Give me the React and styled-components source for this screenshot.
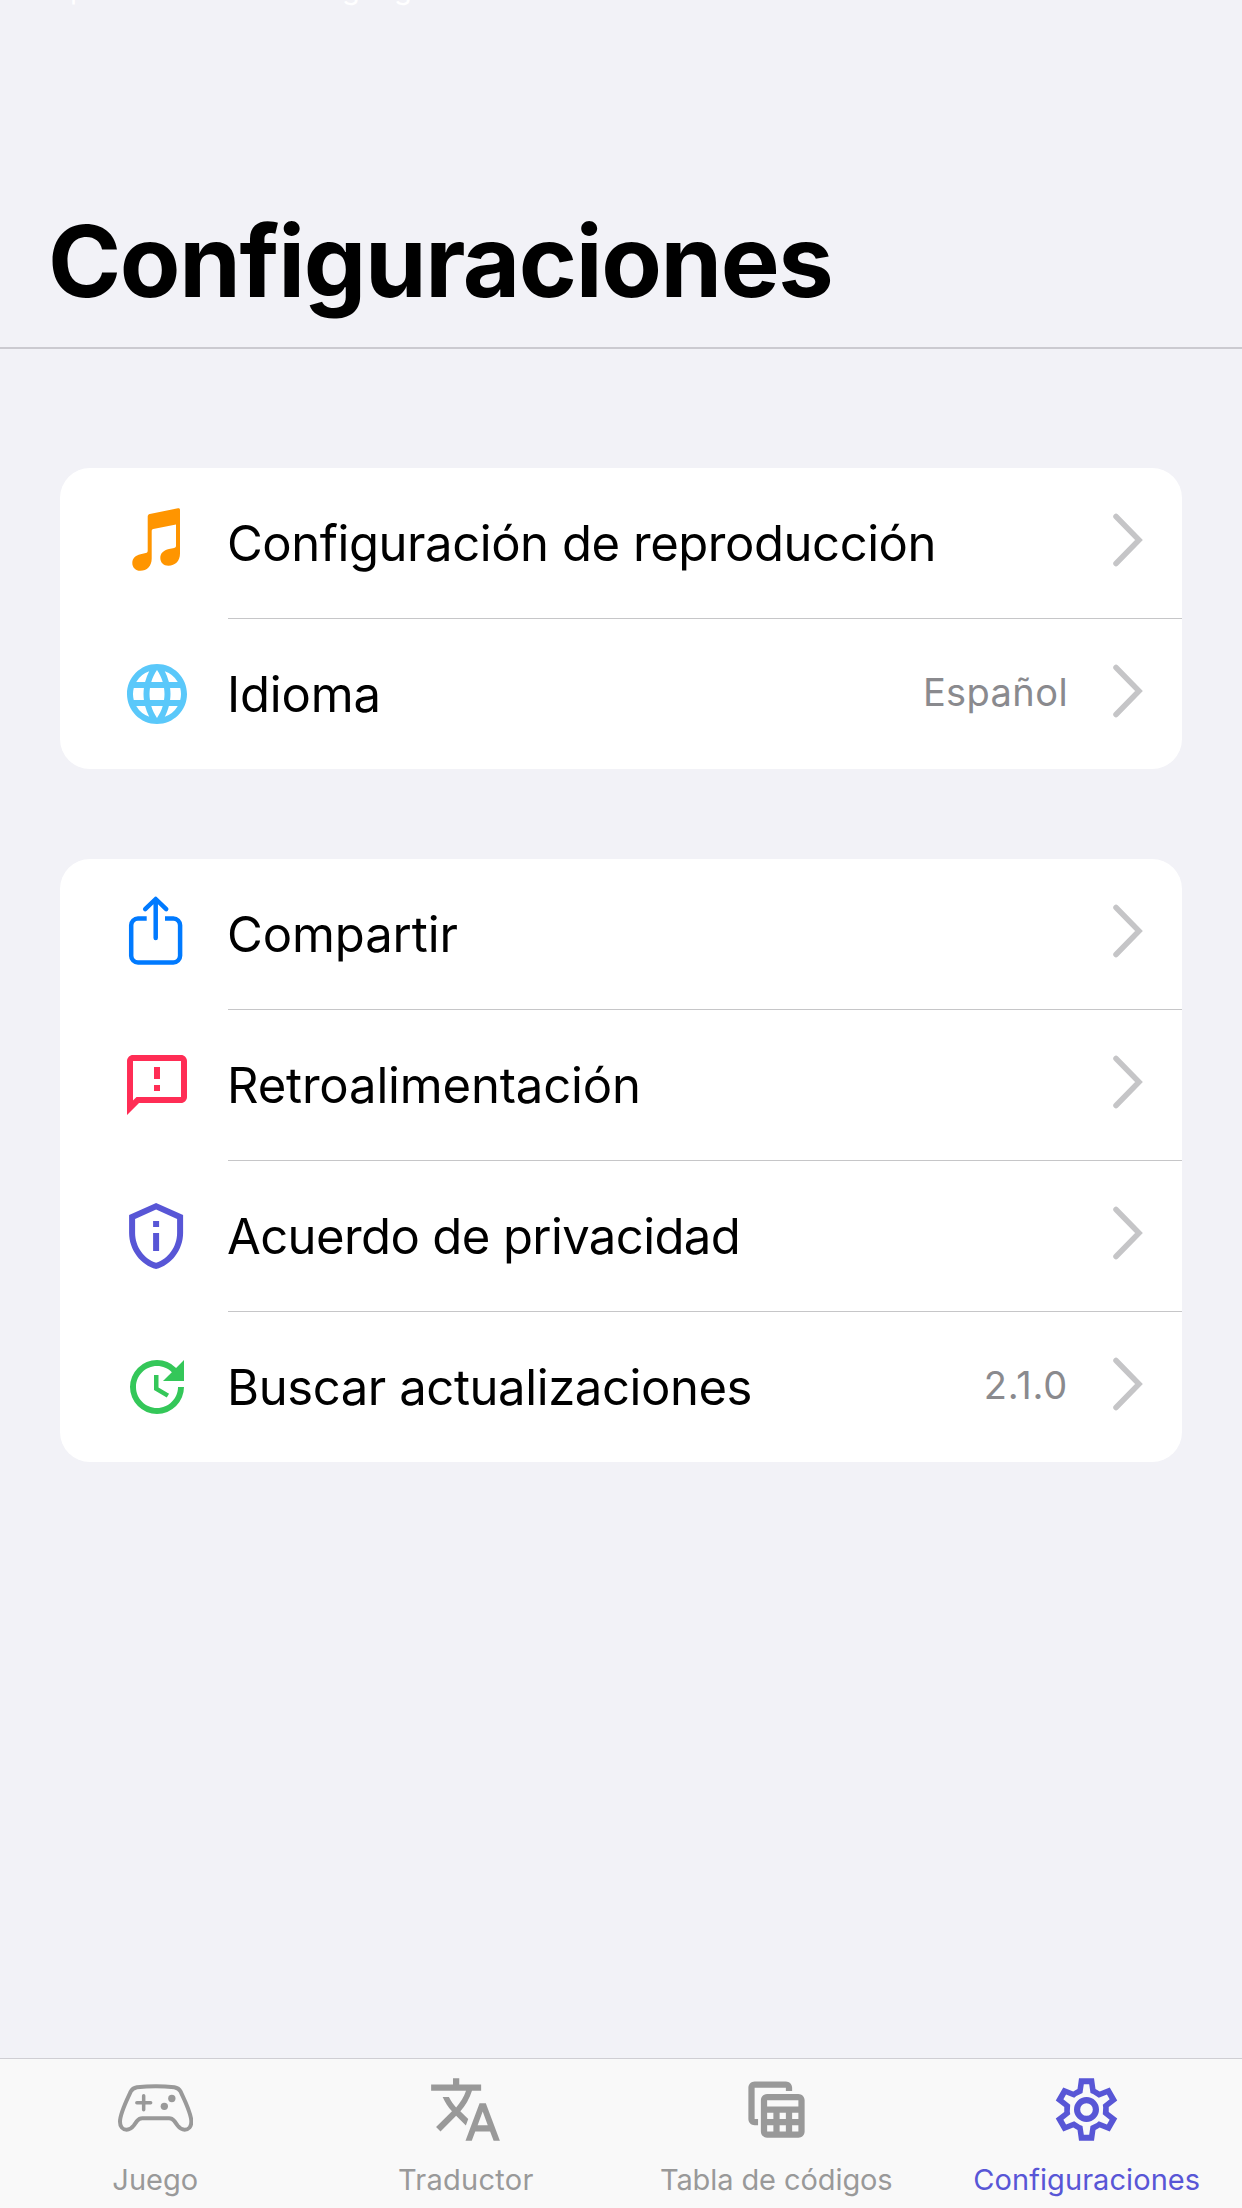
import React from "react";
import styled, { createGlobalStyle } from "styled-components";

const GlobalStyle = createGlobalStyle`
    * { box-sizing: border-box; }

    body {
        margin: 0;
        background: #f2f2f7;
        font-family: Inter, "Liberation Sans", sans-serif;
    }
`;

const Screen = styled.div`
    width: 1242px;
    height: 2208px;
    display: flex;
    flex-direction: column;
    overflow: hidden;
    background: #f2f2f7;
`;

const Header = styled.header`
    height: 349px;
    flex: none;
    display: flex;
    flex-direction: column;
    justify-content: space-between;
    border-bottom: 2px solid #cbcad0;
`;

/* tail of a caption that has scrolled off the top edge */
const ScrolledCaption = styled.div`
    height: 6px;
    overflow: hidden;
    display: flex;
    align-items: flex-end;
    padding-left: 70px;
    color: #fff;
    font-size: 29px;
    line-height: 1;
`;

const CaptionLetter = styled.span`
    width: ${props => props.$width}px;
    flex: none;
    margin-bottom: 3px;
`;

const Title = styled.h1`
    margin: 0;
    padding: 0 48px 36px;
    font-size: 99px;
    font-weight: 700;
    line-height: 1;
    letter-spacing: -1.38px;
    color: #000;
`;

const Content = styled.main`
    flex: 1;
    padding: 119px 60px 0;
    display: flex;
    flex-direction: column;
    gap: 90px;
`;

const Group = styled.section`
    background: #fff;
    border-radius: 30px;
    overflow: hidden;
`;

const Row = styled.div`
    display: flex;
    padding-left: 61px;
    height: 151px;

    &:last-child {
        height: 150px;
    }
`;

const RowIcon = styled.div`
    width: 72px;
    height: 150px;
    margin-right: 35px;
    flex: none;
    display: flex;
    align-items: center;
    color: ${props => props.$color};

    svg {
        width: 72px;
        height: 72px;
        overflow: visible;
    }
`;

const RowBody = styled.div`
    flex: 1;
    display: flex;
    align-items: center;
    padding-right: 39px;
    border-bottom: 1px solid #c6c6c8;

    ${Row}:last-child & {
        border-bottom: none;
    }
`;

const Label = styled.span`
    flex: 1;
    margin-left: -1px;
    font-size: 49px;
    line-height: 1;
    letter-spacing: ${props => props.$tracking}px;
    white-space: nowrap;
    color: #000;
`;

const Value = styled.span`
    font-size: 38px;
    line-height: 1;
    letter-spacing: ${props => props.$tracking}px;
    color: #8a8a8e;
    margin-right: 44px;
    padding-bottom: 4px;
`;

const Chevron = styled.svg`
    width: 31px;
    height: 54px;
    flex: none;
    margin-bottom: 7px;
`;

const TabBar = styled.nav`
    height: 150px;
    flex: none;
    display: grid;
    grid-template-columns: repeat(4, 1fr);
    background: #f9f9f9;
    border-top: 1px solid #cfced3;
`;

const Tab = styled.div`
    display: flex;
    flex-direction: column;
    align-items: center;
    gap: 18px;
    padding-top: 13px;
    color: ${props => (props.$active ? "#5856d6" : "#999")};

    svg {
        width: 75px;
        height: 75px;
        flex: none;
    }
`;

const TabLabel = styled.span`
    font-size: 29px;
    line-height: 1;
    letter-spacing: ${props => props.$tracking}px;
    white-space: nowrap;
`;

const MusicIcon = () => (
    <svg viewBox="0 0 72 72" fill="currentColor">
        <path d="M57 1.2 28.8 6.9C27.4 7.2 26.7 8.1 26.7 9.5V43.5C26.7 45 26.2 45.7 24.8 46L19.5 47.2C14.5 48.4 11.3 51.3 11.3 56C11.3 60.5 14.6 63.8 19.3 63.8C26 63.8 30.7 59 30.7 51.5V24.2C30.7 23 31.2 22.3 32.3 22.1L55 17.6V38.8C55 40 54.5 40.6 53.2 40.9L48 42.1C42.5 43.4 39.3 46.3 39.3 51C39.3 55.5 42.5 58.7 47.4 58.7C54.2 58.7 59 54 59 46.5V2.8C59 1.5 58.2 1 57 1.2Z" />
    </svg>
);

const GlobeIcon = () => (
    <svg viewBox="0 0 24 24" fill="currentColor">
        <path d="M11.99 2C6.47 2 2 6.48 2 12s4.47 10 9.99 10C17.52 22 22 17.52 22 12S17.52 2 11.99 2zm6.93 6h-2.95a15.65 15.65 0 0 0-1.38-3.56A8.03 8.03 0 0 1 18.92 8zM12 4.04c.83 1.2 1.48 2.53 1.91 3.96h-3.82c.43-1.43 1.08-2.76 1.91-3.96zM4.26 14C4.1 13.36 4 12.69 4 12s.1-1.36.26-2h3.38c-.08.66-.14 1.32-.14 2s.06 1.34.14 2H4.26zm.82 2h2.95c.32 1.25.78 2.45 1.38 3.56A7.987 7.987 0 0 1 5.08 16zm2.95-8H5.08a7.987 7.987 0 0 1 4.33-3.56A15.65 15.65 0 0 0 8.03 8zM12 19.96c-.83-1.2-1.48-2.53-1.91-3.96h3.82c-.43 1.43-1.08 2.76-1.91 3.96zM14.34 14H9.66c-.09-.66-.16-1.32-.16-2s.07-1.35.16-2h4.68c.09.65.16 1.32.16 2s-.07 1.34-.16 2zm.25 5.56c.6-1.11 1.06-2.31 1.38-3.56h2.95a8.03 8.03 0 0 1-4.33 3.56zM16.36 14c.08-.66.14-1.32.14-2s-.06-1.34-.14-2h3.38c.16.64.26 1.31.26 2s-.1 1.36-.26 2h-3.38z" />
    </svg>
);

const ShareIcon = () => (
    <svg viewBox="0 0 72 72" fill="none" stroke="currentColor" strokeWidth="4.5" strokeLinejoin="round">
        <path d="M25.7 20.5H17a6.8 6.8 0 0 0-6.8 6.8v30.4a6.8 6.8 0 0 0 6.8 6.8h35.3a6.8 6.8 0 0 0 6.8-6.8V27.3a6.8 6.8 0 0 0-6.8-6.8H44" />
        <path d="M34.7 2v38M24.2 11.2 34.7 1l10.5 10.2" strokeLinecap="round" />
    </svg>
);

const FeedbackIcon = () => (
    <svg viewBox="0 0 24 24" fill="currentColor">
        <path d="M20 2H4c-1.1 0-1.99.9-1.99 2L2 22l4-4h14c1.1 0 2-.9 2-2V4c0-1.1-.9-2-2-2zm0 14H5.17L4 17.17V4h16v12zm-9-4h2v2h-2zm0-6h2v4h-2z" />
    </svg>
);

const PrivacyIcon = () => (
    <svg viewBox="0.3 0 24 24" fill="currentColor">
        <path d="M12 1 3 5v6c0 5.55 3.84 10.74 9 12 5.16-1.26 9-6.45 9-12V5l-9-4zm7 10c0 4.52-2.98 8.69-7 9.93-4.02-1.24-7-5.41-7-9.93V6.3l7-3.11 7 3.11V11zm-8 0h2v6h-2zm0-4h2v2h-2z" />
    </svg>
);

const UpdateIcon = () => (
    <svg viewBox="0 0 24 24" fill="currentColor">
        <path d="M11 8v5l4.25 2.52.77-1.28-3.52-2.09V8zm10 2V3l-2.64 2.64A8.937 8.937 0 0 0 12 3a9 9 0 1 0 9 9h-2c0 3.86-3.14 7-7 7s-7-3.14-7-7 3.14-7 7-7c1.93 0 3.68.79 4.95 2.05L14 10h7z" />
    </svg>
);

const GamepadIcon = () => (
    <svg viewBox="23 6 225 225" fill="none" stroke="currentColor" strokeLinecap="round" strokeLinejoin="round">
        <path
            strokeWidth="12"
            d="M80 52C115 48 158 48 192 52C203 54 207 57 211 65C224 93 243 130 243 155C243 170 235 179 223 179C214 179 208 175 202 167L192 153C186 146 183 145 176 145H96C89 145 86 146 80 153L70 167C64 175 58 179 49 179C37 179 29 170 29 155C29 130 48 93 61 65C65 57 69 54 80 52Z"
        />
        <path strokeWidth="10.5" d="M79.5 98.5H121M100 77V119" />
        <circle cx="184.5" cy="85.5" r="11" fill="currentColor" stroke="none" />
        <circle cx="162" cy="109" r="11" fill="currentColor" stroke="none" />
    </svg>
);

const TranslateIcon = () => (
    <svg viewBox="0 0 24 24" fill="currentColor">
        <path d="m12.87 15.07-2.54-2.51.03-.03A17.52 17.52 0 0 0 14.07 6H17V4h-7V2H8v2H1v1.99h11.17C11.5 7.92 10.44 9.75 9 11.35 8.07 10.32 7.3 9.19 6.69 8h-2c.73 1.63 1.73 3.17 2.98 4.56l-5.09 5.02L4 19l5-5 3.11 3.11.76-2.04zM18.5 10h-2L12 22h2l1.12-3h4.75L21 22h2l-4.5-12zm-2.62 7 1.62-4.33L19.12 17h-3.24z" />
    </svg>
);

const TableIcon = () => (
    <svg viewBox="0 0 24 24" fill="currentColor">
        <path d="M6.1 17H5c-1.1 0-2-.9-2-2V5c0-1.1.9-2 2-2h10c1.1 0 2 .9 2 2v1.1h-2V5H5v10h1.1z" />
        <path
            fillRule="evenodd"
            d="M9 7h10c1.1 0 2 .9 2 2v10c0 1.1-.9 2-2 2H9c-1.1 0-2-.9-2-2V9c0-1.1.9-2 2-2zm0 2v2h10V9zm0 4v2h2v-2zm4 0v2h2v-2zm4 0v2h2v-2zm-8 4v2h2v-2zm4 0v2h2v-2zm4 0v2h2v-2z"
        />
    </svg>
);

/* builds a closed six-tooth outline by turning one tooth in 60deg steps */
const cog = tooth => {
    const points = [0, 1, 2, 3, 4, 5].flatMap(i => {
        const a = (i * Math.PI) / 3;
        return tooth.map(([x, y]) =>
            `${(x * Math.cos(a) - y * Math.sin(a)).toFixed(2)} ${(x * Math.sin(a) + y * Math.cos(a)).toFixed(2)}`
        );
    });
    return `M${points.join("L")}Z`;
};

const GearIcon = () => (
    <svg viewBox="-112.5 -112.5 225 225" fill="currentColor" fillRule="evenodd">
        <path
            d={
                cog([[-27, -61.5], [-22.5, -93.5], [22.5, -93.5], [27, -61.5]]) +
                cog([[-12, -49.5], [-8, -75.5], [8, -75.5], [12, -49.5], [19.5, -46.5]])
            }
        />
        <path d="M0-37.5a37.5 37.5 0 1 0 0 75a37.5 37.5 0 1 0 0-75zM0-19a19 19 0 1 1 0 38a19 19 0 1 1 0-38z" />
    </svg>
);

const groups = [
    [
        { label: "Configuración de reproducción", tracking: -0.44, color: "#ff9500", icon: MusicIcon },
        { label: "Idioma", tracking: -0.15, color: "#5ac8fa", icon: GlobeIcon, value: "Español", valueTracking: 0.4 },
    ],
    [
        { label: "Compartir", tracking: -0.1, color: "#007aff", icon: ShareIcon },
        { label: "Retroalimentación", tracking: -0.17, color: "#ff2d55", icon: FeedbackIcon },
        { label: "Acuerdo de privacidad", tracking: -0.6, color: "#5856d6", icon: PrivacyIcon },
        { label: "Buscar actualizaciones", tracking: -0.41, color: "#34c759", icon: UpdateIcon, value: "2.1.0", valueTracking: 0.8 },
    ],
];

const tabs = [
    { label: "Juego", tracking: 0, icon: GamepadIcon },
    { label: "Traductor", tracking: 0.27, icon: TranslateIcon },
    { label: "Tabla de códigos", tracking: -0.09, icon: TableIcon },
    { label: "Configuraciones", tracking: 0.07, icon: GearIcon, active: true },
];

function SettingsRow({ item }) {
    const Icon = item.icon;
    return (
        <Row>
            <RowIcon $color={item.color}>
                <Icon />
            </RowIcon>
            <RowBody>
                <Label $tracking={item.tracking}>{item.label}</Label>
                {item.value && <Value $tracking={item.valueTracking}>{item.value}</Value>}
                <Chevron viewBox="0 0 31 54" fill="none" stroke="#c5c5c7" strokeWidth="5.5" strokeLinecap="round">
                    <path d="M4 3.5 27 27 4 50.5" />
                </Chevron>
            </RowBody>
        </Row>
    );
}

export default function App() {
    return (
        <Screen>
            <GlobalStyle />
            <Header>
                <ScrolledCaption>
                    <CaptionLetter $width={272}>p</CaptionLetter>
                    <CaptionLetter $width={52}>g</CaptionLetter>
                    <CaptionLetter $width={52}>g</CaptionLetter>
                </ScrolledCaption>
                <Title>Configuraciones</Title>
            </Header>
            <Content>
                {groups.map((items, i) => (
                    <Group key={i}>
                        {items.map(item => (
                            <SettingsRow key={item.label} item={item} />
                        ))}
                    </Group>
                ))}
            </Content>
            <TabBar>
                {tabs.map(({ label, tracking, icon: Icon, active }) => (
                    <Tab key={label} $active={active}>
                        <Icon />
                        <TabLabel $tracking={tracking}>{label}</TabLabel>
                    </Tab>
                ))}
            </TabBar>
        </Screen>
    );
}
